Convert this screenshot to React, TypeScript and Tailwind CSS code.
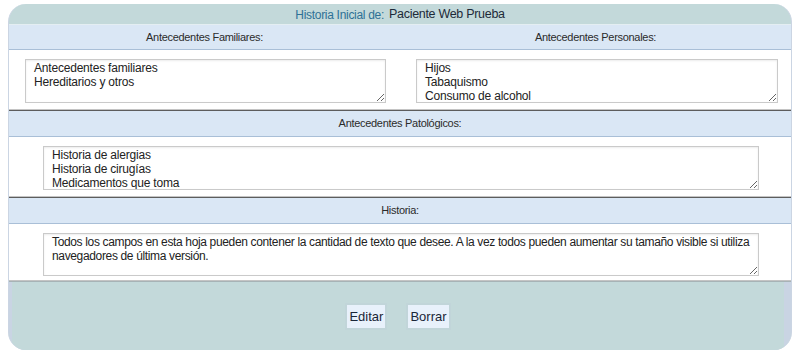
import { useState } from 'react';

const font = { fontFamily: '"Liberation Sans", Arial, sans-serif' };

const LabelRow = ({ children, top }: { children: React.ReactNode; top?: boolean }) => (
  <div
    className={`flex ${top ? 'h-[26px]' : 'h-[27px]'} items-center bg-[#dae7f5] border-b border-[#a9bfd7] text-[11px] tracking-[-0.3px] text-[#2b2b2b] ${
      top ? 'border-t border-t-[#e4eef2]' : 'border-t border-t-[#5d5d5d]'
    }`}
  >
    {children}
  </div>
);

const Field = ({
  value,
  className,
  wrap,
  tight,
}: {
  value: string;
  className: string;
  wrap?: 'off' | 'soft';
  tight?: boolean;
}) => (
  <textarea
    defaultValue={value}
    spellCheck={false}
    wrap={wrap}
    className={`block overflow-hidden border border-[#cacaca] bg-white pl-[8px] pr-[2px] pt-[1px] pb-0 text-[12px] leading-[14px] ${
      tight ? 'tracking-[-0.35px]' : 'tracking-[-0.2px]'
    } text-[#222] shadow-[inset_0_1px_2px_rgba(0,0,0,0.08)] outline-none ${className}`}
  />
);

export default function App() {
  const [paciente] = useState('Paciente Web Prueba');

  return (
    <div className="h-[360px] w-[800px] bg-white pt-[4px]" style={font}>
      <div className="mx-[8px] h-[346px] w-[784px] overflow-hidden rounded-[18px] border-x border-[#cbd5e3] bg-[#c3d9da] flex flex-col">
        {/* header */}
        <div className="flex h-[20px] shrink-0 items-center justify-center gap-[5px] pt-[1px] tracking-[-0.3px]">
          <span className="text-[12px] text-[#2e7196]">Historia Inicial de:</span>
          <span className="text-[12.5px] text-[#1d2a38]">{paciente}</span>
        </div>

        <LabelRow top>
          <div className="grid w-full grid-cols-2">
            <p className="text-center">Antecedentes Familiares:</p>
            <p className="text-center">Antecedentes Personales:</p>
          </div>
        </LabelRow>
        <div className="grid h-[60px] shrink-0 grid-cols-2 bg-white border-b border-[#c4c4c4]">
          <div className="pl-[16px] pt-[9px]">
            <Field className="h-[44px] w-[361px]" value={'Antecedentes familiares\nHereditarios y otros'} />
          </div>
          <div className="pl-[16px] pt-[9px]">
            <Field className="h-[44px] w-[362px]" value={'Hijos\nTabaquismo\nConsumo de alcohol'} />
          </div>
        </div>

        <LabelRow>
          <p className="w-full text-center">Antecedentes Patológicos:</p>
        </LabelRow>
        <div className="h-[60px] shrink-0 bg-white pl-[34px] pt-[9px] border-b border-[#c4c4c4]">
          <Field className="h-[44px] w-[716px]" value={'Historia de alergias\nHistoria de cirugías\nMedicamentos que toma'} />
        </div>

        <LabelRow>
          <p className="w-full text-center">Historia:</p>
        </LabelRow>
        <div className="h-[57px] shrink-0 bg-white pl-[34px] pt-[9px] border-b border-[#c4c4c4]">
          <Field
            wrap="off"
            tight
            className="h-[43px] w-[716px]"
            value={
              'Todos los campos en esta hoja pueden contener la cantidad de texto que desee. A la vez todos pueden aumentar su tamaño visible si utiliza\nnavegadores de última versión.'
            }
          />
        </div>

        {/* footer */}
        <div className="flex flex-1 border-t border-[#a7b3b6] bg-[#c9d4e3]">
          <div className="ml-[3px] mr-[7px] flex flex-1 items-start justify-center gap-[23px] bg-[#c3d9da] pt-[23px]">
            <button className="h-[23px] bg-[#e8f1fb] px-[2px] text-[13px] text-[#1a2638] shadow-[0_0_0_2px_rgba(190,204,214,0.3)]">
              Editar
            </button>
            <button className="h-[23px] bg-[#e8f1fb] px-[2px] text-[13px] text-[#1a2638] shadow-[0_0_0_2px_rgba(190,204,214,0.3)]">
              Borrar
            </button>
          </div>
        </div>
      </div>
    </div>
  );
}
